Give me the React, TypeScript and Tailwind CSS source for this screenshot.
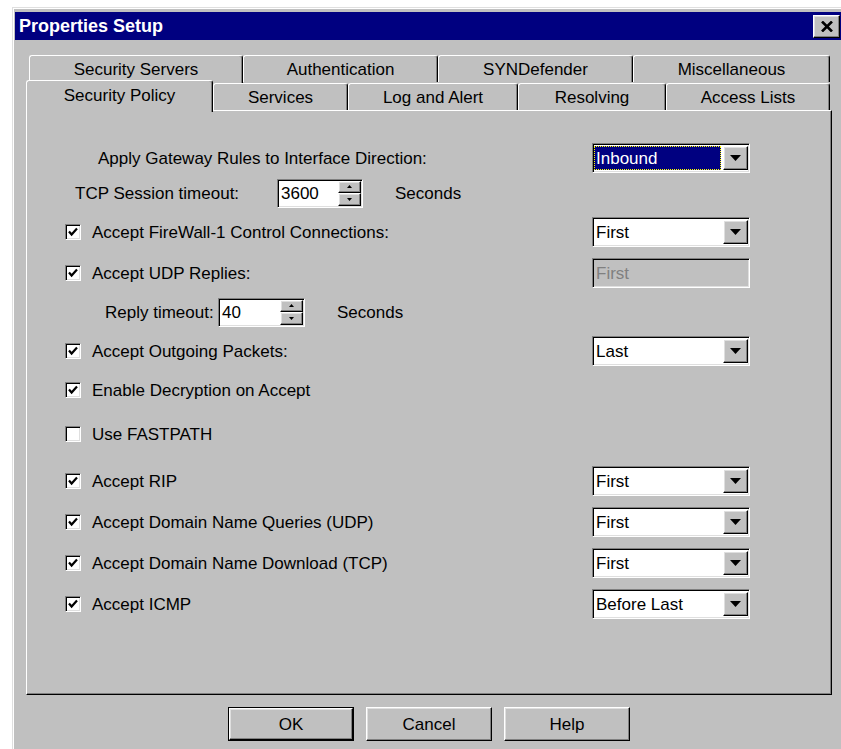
import type { ReactNode } from 'react';
import clsx from 'clsx';

// Win95 style bevels
const raised =
  'border border-t-white border-l-white border-r-black border-b-black shadow-[inset_-1px_-1px_#808080,inset_1px_1px_#dfdfdf]';
const sunken =
  'border border-t-[#808080] border-l-[#808080] border-r-white border-b-white shadow-[inset_1px_1px_#000,inset_-1px_-1px_#dfdfdf]';

function DownArrow() {
  return (
    <svg width="11" height="6" viewBox="0 0 11 6">
      <path d="M0 0 H11 L5.5 6 Z" fill="#000" />
    </svg>
  );
}

function CheckBox({ checked }: { checked: boolean }) {
  return (
    <span className={clsx('flex h-[16px] w-[16px] shrink-0 items-center justify-center bg-white', sunken)}>
      {checked && (
        <svg width="10" height="10" viewBox="0 0 10 10">
          <path d="M1 4.5 L3.6 7.5 L9 1.5" stroke="#000" strokeWidth="2.2" fill="none" />
        </svg>
      )}
    </span>
  );
}

function Select({ value, focused, disabled }: { value: string; focused?: boolean; disabled?: boolean }) {
  return (
    <div
      className={clsx(
        'flex h-[30px] w-[158px] shrink-0 items-center p-[1px]',
        sunken,
        disabled ? 'bg-[#c0c0c0]' : 'bg-white'
      )}
    >
      <div className="flex h-full flex-1 items-center">
        <span
          className={clsx(
            'flex h-[24px] w-full items-center pl-[2px]',
            focused && 'bg-[#000080] text-white outline outline-1 outline-dotted outline-[#ffff00] -outline-offset-1',
            disabled && 'text-[#808080]'
          )}
        >
          {value}
        </span>
      </div>
      {!disabled && (
        <div className={clsx('ml-[2px] flex h-[24px] w-[25px] items-center justify-center bg-[#c0c0c0]', raised)}>
          <DownArrow />
        </div>
      )}
    </div>
  );
}

function Spin({ value, width }: { value: string; width: string }) {
  return (
    <div className={clsx('flex h-[29px] shrink-0 items-center bg-white p-[1px]', sunken, width)}>
      <span className="flex-1 pl-[2px]">{value}</span>
      <div className="flex h-full w-[23px] flex-col">
        <div className={clsx('flex h-1/2 items-center justify-center bg-[#c0c0c0]', raised)}>
          <svg width="5" height="3" viewBox="0 0 5 3">
            <path d="M0 3 H5 L2.5 0 Z" fill="#000" />
          </svg>
        </div>
        <div className={clsx('flex h-1/2 items-center justify-center bg-[#c0c0c0]', raised)}>
          <svg width="5" height="3" viewBox="0 0 5 3">
            <path d="M0 0 H5 L2.5 3 Z" fill="#000" />
          </svg>
        </div>
      </div>
    </div>
  );
}

function Row({ className, children, right }: { className: string; children: ReactNode; right?: ReactNode }) {
  return (
    <div className={clsx('flex h-[30px] items-center', className)}>
      <div className="flex flex-1 items-center">{children}</div>
      {right}
    </div>
  );
}

function CheckRow({ label, checked = true, className, right }: { label: string; checked?: boolean; className: string; right?: ReactNode }) {
  return (
    <Row className={className} right={right}>
      <CheckBox checked={checked} />
      <span className="ml-[11px]">{label}</span>
    </Row>
  );
}

function Tab({ label, width, selected }: { label: string; width: string; selected?: boolean }) {
  return (
    <div
      className={clsx(
        'flex shrink-0 items-center justify-center rounded-t-[3px] border-t border-l border-r border-t-white border-l-white border-r-black bg-[#c0c0c0] shadow-[inset_-1px_0_#808080]',
        width,
        selected ? 'relative z-10 mb-[-2px] h-[32px] pb-[3px]' : 'h-[27px]'
      )}
    >
      {label}
    </div>
  );
}

function Button({ label, isDefault }: { label: string; isDefault?: boolean }) {
  return (
    <div className={clsx('h-[34px] w-[126px]', isDefault && 'border border-black')}>
      <div className={clsx('flex h-full w-full items-center justify-center bg-[#c0c0c0]', raised)}>{label}</div>
    </div>
  );
}

export default function App() {
  return (
    <div className="h-[749px] w-[841px] overflow-hidden bg-white pl-[12px] pt-[7px] font-['Liberation_Sans',Arial,sans-serif] text-[17px] leading-none text-black">
      <div className="h-[760px] w-[834px] border-t border-l border-[#dfdfdf] bg-[#c0c0c0]">
        <div className="h-full border-t border-l border-white pl-[1px] pt-[3px]">
          {/* title bar */}
          <div className="flex h-[28px] w-[828px] items-center justify-between bg-[#000080] pl-[4px] pr-[3px]">
            <span className="text-[18px] font-bold text-white">Properties Setup</span>
            <div className={clsx('flex h-[23px] w-[27px] items-center justify-center bg-[#c0c0c0]', raised)}>
              <svg width="12" height="11" viewBox="0 0 12 11">
                <path d="M1 0.5 L11 10.5 M11 0.5 L1 10.5" stroke="#000" strokeWidth="2.6" />
              </svg>
            </div>
          </div>

          <div className="ml-[11px] mt-[15px] w-[806px]">
            {/* back row of tabs */}
            <div className="flex pl-[3px]">
              <Tab label="Security Servers" width="w-[214px] h-[28px]" />
              <Tab label="Authentication" width="w-[195px]" />
              <Tab label="SYNDefender" width="w-[195px]" />
              <Tab label="Miscellaneous" width="w-[197px]" />
            </div>
            {/* front row of tabs */}
            <div className="mt-[-3px] flex h-[30px] items-end">
              <Tab label="Security Policy" width="w-[187px]" selected />
              <Tab label="Services" width="w-[135px]" />
              <Tab label="Log and Alert" width="w-[170px]" />
              <Tab label="Resolving" width="w-[148px]" />
              <Tab label="Access Lists" width="w-[164px]" />
            </div>

            {/* Security Policy page */}
            <div className="h-[585px] border-t border-l border-r border-b border-t-white border-l-white border-r-black border-b-black pl-[38px] pr-[81px] pt-[32px] shadow-[inset_-1px_-1px_#808080]">
              <Row className="" right={<Select value="Inbound" focused />}>
                <span className="ml-[33px]">Apply Gateway Rules to Interface Direction:</span>
              </Row>
              <Row className="mt-[5px]">
                <span className="ml-[10px] w-[202px]">TCP Session timeout:</span>
                <Spin value="3600" width="w-[86px]" />
                <span className="ml-[32px]">Seconds</span>
              </Row>
              <CheckRow className="mt-[9px]" label="Accept FireWall-1 Control Connections:" right={<Select value="First" />} />
              <CheckRow className="mt-[11px]" label="Accept UDP Replies:" right={<Select value="First" disabled />} />
              <Row className="mt-[9px]">
                <span className="ml-[40px] w-[113px]">Reply timeout:</span>
                <Spin value="40" width="w-[87px]" />
                <span className="ml-[32px]">Seconds</span>
              </Row>
              <CheckRow className="mt-[9px]" label="Accept Outgoing Packets:" right={<Select value="Last" />} />
              <CheckRow className="mt-[9px]" label="Enable Decryption on Accept" />
              <CheckRow className="mt-[14px]" label="Use FASTPATH" checked={false} />
              <CheckRow className="mt-[17px]" label="Accept RIP" right={<Select value="First" />} />
              <CheckRow className="mt-[11px]" label="Accept Domain Name Queries (UDP)" right={<Select value="First" />} />
              <CheckRow className="mt-[11px]" label="Accept Domain Name Download (TCP)" right={<Select value="First" />} />
              <CheckRow className="mt-[11px]" label="Accept ICMP" right={<Select value="Before Last" />} />
            </div>

            <div className="mt-[12px] flex justify-center gap-[12px]">
              <Button label="OK" isDefault />
              <Button label="Cancel" />
              <Button label="Help" />
            </div>
          </div>
        </div>
      </div>
    </div>
  );
}
